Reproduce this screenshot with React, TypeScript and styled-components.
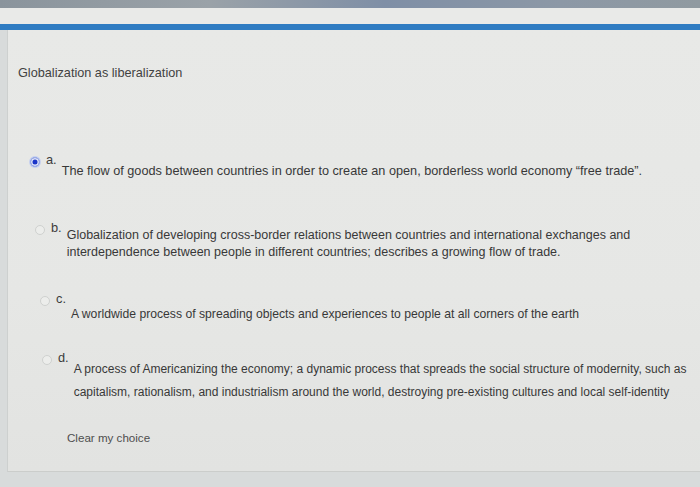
import React from "react";
import styled, { createGlobalStyle } from "styled-components";

const Global = createGlobalStyle`
  html, body { margin: 0; padding: 0; }
  body {
    width: 700px;
    height: 487px;
    overflow: hidden;
    background: #dcdfdf;
    font-family: "Liberation Sans", Arial, sans-serif;
  }
`;

const Screen = styled.div`
  width: 700px;
  height: 487px;
  display: flex;
  flex-direction: column;
  background: #e4e5e3;
`;

const TopStrip = styled.div`
  height: 8px;
  background: linear-gradient(90deg, #8a949c 0%, #9aa2a8 30%, #7f8fa6 55%, #8c98a6 80%, #909aa0 100%);
`;

const Band = styled.div`
  height: 16px;
  background: #e9eae8;
`;

const BlueBar = styled.div`
  height: 6px;
  background: #2f7cc2;
  box-shadow: 0 1px 0 #b9cfe2;
`;

const Body = styled.div`
  flex: 1;
  display: flex;
  background: #d8dbdb;
`;

const Panel = styled.div`
  flex: 1;
  margin-left: 7px;
  height: 442px;
  border-left: 1px solid #cdd0cf;
  border-bottom: 1px solid #cbcdcb;
  background: linear-gradient(180deg, #e8e9e7 0%, #e6e7e5 60%, #e2e3e1 100%);
  display: flex;
  flex-direction: column;
  padding: 36px 8px 0 10px;
  box-sizing: border-box;
`;

const Title = styled.div`
  font-size: 12.7px;
  line-height: 14px;
  color: #424242;
`;

const Options = styled.div`
  display: flex;
  flex-direction: column;
`;

const Row = styled.div<{ $top: number; $indent: number; $size: number }>`
  display: flex;
  align-items: flex-start;
  margin-top: ${(p) => p.$top}px;
  padding-left: ${(p) => p.$indent}px;
  font-size: ${(p) => p.$size}px;
`;

const Radio = styled.span<{ $on?: boolean }>`
  flex: none;
  box-sizing: border-box;
  width: 10px;
  height: 10px;
  margin-top: 4px;
  border-radius: 50%;
  border: 1px solid ${(p) => (p.$on ? "#9fb0e8" : "#cfd1cf")};
  background: ${(p) => (p.$on ? "#1b35c8" : "#ecedeb")};
  box-shadow: ${(p) => (p.$on ? "inset 0 0 0 1.5px #dfe4f7, 0 0 0 1px #c6d0ef" : "none")};
`;

const Letter = styled.span`
  flex: none;
  margin-left: 6px;
  font-size: 12.8px;
  line-height: 14px;
  color: #3c3c3c;
`;

const Text = styled.div<{ $drop: number }>`
  margin-left: 5px;
  padding-top: ${(p) => p.$drop}px;
  line-height: 17px;
  color: #383838;
`;

const Line = styled.span<{ $gap?: number }>`
  display: block;
  white-space: nowrap;
  margin-top: ${(p) => p.$gap ?? 0}px;
`;

const Clear = styled.div`
  margin-top: 30px;
  padding-left: 49px;
  font-size: 11.6px;
  line-height: 14px;
  color: #4e4e4e;
`;

type Opt = {
  letter: string;
  lines: string[];
  on?: boolean;
  top: number;
  indent: number;
  size: number;
  drop: number;
  gap?: number;
};

const options: Opt[] = [
  {
    letter: "a.",
    on: true,
    top: 73,
    indent: 12,
    size: 12.7,
    drop: 10,
    lines: ["The flow of goods between countries in order to create an open, borderless world economy \u201cfree trade\u201d."],
  },
  {
    letter: "b.",
    top: 41,
    indent: 17,
    size: 12.5,
    drop: 6,
    lines: [
      "Globalization of developing cross-border relations between countries and international exchanges and",
      "interdependence between people in different countries; describes a growing flow of trade.",
    ],
  },
  {
    letter: "c.",
    top: 31,
    indent: 22,
    size: 12.2,
    drop: 14,
    lines: ["A worldwide process of spreading objects and experiences to people at all corners of the earth"],
  },
  {
    letter: "d.",
    top: 28,
    indent: 24,
    size: 12,
    drop: 10,
    gap: 6,
    lines: [
      "A process of Americanizing the economy; a dynamic process that spreads the social structure of modernity, such as",
      "capitalism, rationalism, and industrialism around the world, destroying pre-existing cultures and local self-identity",
    ],
  },
];

export default function App() {
  return (
    <>
      <Global />
      <Screen>
        <TopStrip />
        <Band />
        <BlueBar />
        <Body>
          <Panel>
            <Title>Globalization as liberalization</Title>
            <Options>
              {options.map((o) => (
                <Row key={o.letter} $top={o.top} $indent={o.indent} $size={o.size}>
                  <Radio $on={o.on} />
                  <Letter>{o.letter}</Letter>
                  <Text $drop={o.drop}>
                    {o.lines.map((l, i) => (
                      <Line key={i} $gap={i > 0 ? o.gap : 0}>
                        {l}
                      </Line>
                    ))}
                  </Text>
                </Row>
              ))}
            </Options>
            <Clear>Clear my choice</Clear>
          </Panel>
        </Body>
      </Screen>
    </>
  );
}
